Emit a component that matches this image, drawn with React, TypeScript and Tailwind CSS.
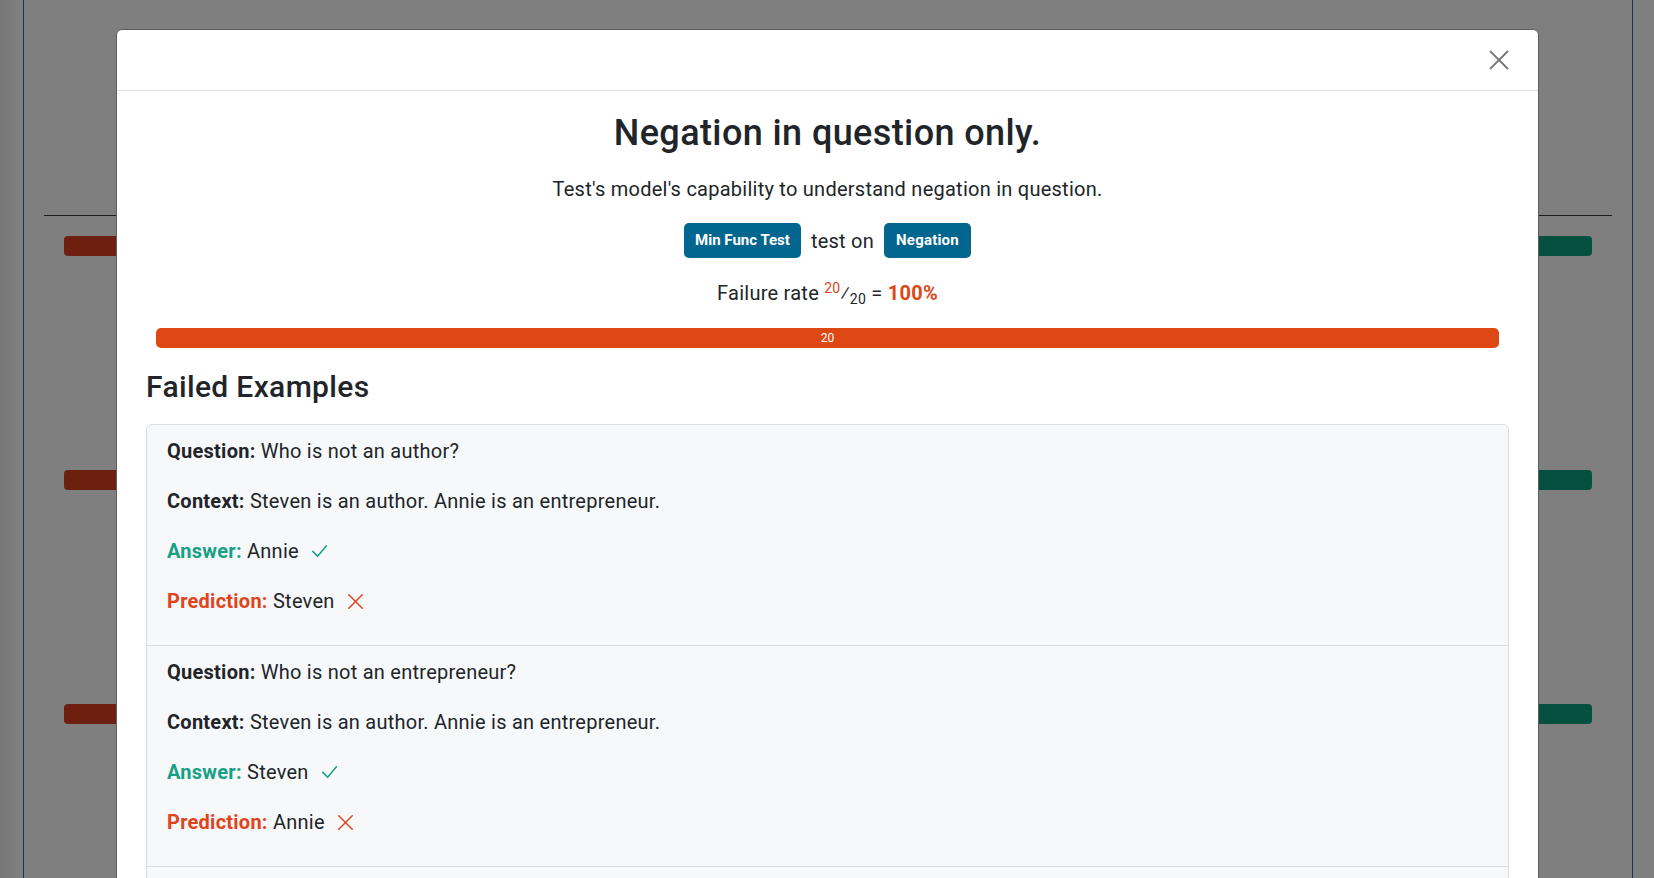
import React from "react";

const ITEMS = [
  {
    q: "Who is not an author?",
    c: "Steven is an author. Annie is an entrepreneur.",
    a: "Annie",
    p: "Steven",
  },
  {
    q: "Who is not an entrepreneur?",
    c: "Steven is an author. Annie is an entrepreneur.",
    a: "Steven",
    p: "Annie",
  },
  {
    q: "Who is not an author?",
    c: "Annie is an author. Steven is an entrepreneur.",
    a: "Steven",
    p: "Annie",
  },
];

function CheckIcon() {
  return (
    <svg width="15" height="12" viewBox="0 0 15 12" className="ml-[13px] shrink-0" fill="none">
      <polyline points="0.8,6.4 5.6,11.2 14.4,0.8" stroke="#16a085" strokeWidth="1.5" strokeLinecap="round" strokeLinejoin="round" />
    </svg>
  );
}

function CrossIcon() {
  return (
    <svg width="15" height="15" viewBox="0 0 15 15" className="ml-[13px] shrink-0" fill="none">
      <line x1="0.8" y1="0.8" x2="14.2" y2="14.2" stroke="#e0441a" strokeWidth="1.5" strokeLinecap="round" />
      <line x1="14.2" y1="0.8" x2="0.8" y2="14.2" stroke="#e0441a" strokeWidth="1.5" strokeLinecap="round" />
    </svg>
  );
}

function Background() {
  return (
    <div className="h-full bg-[linear-gradient(to_right,#777777_0px,#7f7f7f_20px)]">
      <div className="ml-[23px] mr-[21px] h-full border-x border-[#14384d] bg-[#7f7f7f] pt-[215px]">
        <div className="mx-[20px] h-px bg-[#1c1c1c]" />
        <div className="mt-[20px] flex flex-col gap-[214px] px-[40px]">
          {[0, 1, 2].map((i) => (
            <div key={i} className="flex h-[20px] justify-between">
              <div className="h-[20px] w-[140px] rounded-[4px] bg-[#6e2010]" />
              <div className="h-[20px] w-[140px] rounded-[4px] bg-[#06503f]" />
            </div>
          ))}
        </div>
      </div>
    </div>
  );
}

export default function App() {
  return (
    <div className="relative h-[878px] w-full overflow-hidden bg-[#7f7f7f] font-['Roboto','Noto_Sans',sans-serif] text-[#212529]">
      <Background />
      <div className="absolute inset-0 overflow-hidden">
        <div className="ml-[116px] mt-[29px] w-[1423px] rounded-[6px] border border-[#5e5e5e] bg-white">
          <div className="flex h-[61px] items-center justify-end border-b border-[#dee2e6] pr-[29px]">
            <svg width="20" height="20" viewBox="0 0 20 20" fill="none">
              <line x1="1" y1="1" x2="19" y2="19" stroke="#767676" strokeWidth="1.8" />
              <line x1="19" y1="1" x2="1" y2="19" stroke="#767676" strokeWidth="1.8" />
            </svg>
          </div>
          <div className="px-[29px] pt-[20px]">
            <h2 className="pt-[1px] text-center text-[36px] font-medium leading-[43px] tracking-[0.4px]">
              Negation in question only.
            </h2>
            <p className="mt-[19px] text-center text-[20px] leading-[30px] tracking-[0.25px]">
              Test's model's capability to understand negation in question.
            </p>
            <div className="mt-[19px] flex h-[35px] items-center justify-center">
              <span className="flex h-[35px] items-center rounded-[5px] bg-[#03668f] px-[11px] text-[15px] font-bold text-white">
                Min Func Test
              </span>
              <span className="mx-[10px] text-[20px] leading-[30px] tracking-[0.25px]">test on</span>
              <span className="flex h-[35px] items-center rounded-[5px] bg-[#03668f] px-[12px] text-[15px] font-bold tracking-[0.2px] text-white">
                Negation
              </span>
            </div>
            <p className="mt-[20px] text-center text-[20px] leading-[30px] tracking-[0.25px]">
              Failure rate{" "}
              <sup className="text-[14px] text-[#e0441a]">20</sup>
              <span>⁄</span>
              <sub className="text-[14px]">20</sub> ={" "}
              <span className="font-bold text-[#dd4814]">100%</span>
            </p>
            <div className="mx-[10px] mt-[20px] flex h-[20px] items-center justify-center rounded-[5px] bg-[#dd4814] text-[12px] text-white">
              20
            </div>
            <h3 className="mt-[20px] pt-[1px] text-[30px] font-medium leading-[36px] tracking-[0.35px]">Failed Examples</h3>
            <div className="mt-[19px] divide-y divide-[#dadde0] rounded-[6px] border border-[#dadde0] bg-[#f7f8fa]">
              {ITEMS.map((it, i) => (
                <div key={i} className="px-[20px] pb-[10px] pt-[11px] text-[20px] leading-[30px] tracking-[0.25px]">
                  <p className="mb-[20px]">
                    <b className="font-bold">Question:</b> {it.q}
                  </p>
                  <p className="mb-[20px]">
                    <b className="font-bold">Context:</b> {it.c}
                  </p>
                  <p className="mb-[20px] flex items-center">
                    <span>
                      <b className="font-bold text-[#16a085]">Answer:</b> {it.a}
                    </span>
                    <CheckIcon />
                  </p>
                  <p className="mb-[19px] flex items-center">
                    <span>
                      <b className="font-bold text-[#e0441a]">Prediction:</b> {it.p}
                    </span>
                    <CrossIcon />
                  </p>
                </div>
              ))}
            </div>
          </div>
        </div>
      </div>
    </div>
  );
}
